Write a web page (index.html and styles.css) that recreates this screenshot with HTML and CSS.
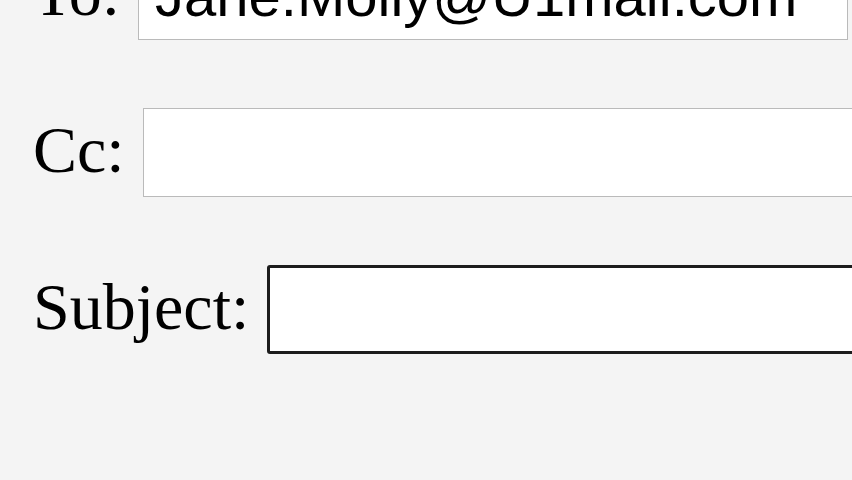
FILE: index.html
```html
<!DOCTYPE html>
<html lang="en">
<head>
<meta charset="utf-8">
<title>Compose</title>
<link rel="stylesheet" href="styles.css">
</head>
<body>
<form class="mail-form">
  <div class="field">
    <label class="field-label" for="to">To:</label>
    <input class="field-input" id="to" type="text" value="Jane.Molly@U1mail.com">
  </div>
  <div class="field">
    <label class="field-label" for="cc">Cc:</label>
    <input class="field-input" id="cc" type="text" value="">
  </div>
  <div class="field">
    <label class="field-label" for="subject">Subject:</label>
    <input class="field-input field-input--focus" id="subject" type="text" value="">
  </div>
</form>
</body>
</html>
```
FILE: styles.css
```css
html, body {
  margin: 0;
  padding: 0;
  background: #f4f4f4;
  overflow: hidden;
}

.mail-form {
  display: flex;
  flex-direction: column;
  gap: 68px;
  padding-left: 33px;
  margin-top: -49px;
}

.field {
  display: flex;
  align-items: center;
  gap: 18px;
}

.field-label {
  font-family: "Liberation Serif", "Times New Roman", serif;
  font-size: 66px;
  line-height: normal;
  padding-bottom: 5px;
  color: #000;
  white-space: nowrap;
}

.field-input {
  flex: none;
  box-sizing: border-box;
  width: 710px;
  height: 89px;
  margin: 0;
  padding: 0 16px;
  border: 1px solid #bababa;
  border-radius: 0;
  background: #fff;
  font-family: "Liberation Sans", Arial, sans-serif;
  font-size: 58px;
  color: #000;
  outline: none;
}

.field-input--focus {
  border: 3px solid #1c1c1c;
  border-radius: 3px;
}
```
